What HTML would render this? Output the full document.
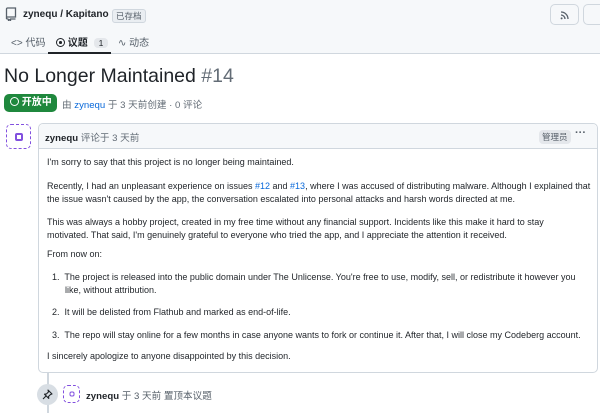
<!DOCTYPE html>
<html><head><meta charset="utf-8"><style>
*{margin:0;padding:0;box-sizing:border-box}
body{width:600px;height:413px;overflow:hidden;background:#fff;font-family:"Liberation Sans","Noto Sans CJK SC",sans-serif;color:#1f2328;position:relative}
.hdr{position:absolute;left:0;top:0;width:600px;height:54px;background:#f6f8fa;border-bottom:1px solid #d0d7de}
.abs{position:absolute;white-space:nowrap}
.lbl{border:1px solid #d0d7de;border-radius:3px;background:#eaeef2;font-size:8.5px;padding:0 3px;color:#57606a}
.p{position:absolute;left:47px;font-size:9px;line-height:12.5px;color:#1f2328;white-space:nowrap}
a{color:#0969da;text-decoration:none}
.av{position:absolute;border:1.5px dashed #8250df;border-radius:5px}
.av i{position:absolute;left:50%;top:50%;border:2px solid #8250df;border-radius:2px;transform:translate(-50%,-50%)}
</style></head><body>
<div class="hdr"></div>
<svg class="abs" style="left:5px;top:7px" width="12" height="14" viewBox="0 0 12 14"><path d="M1.5 12V2a1 1 0 011-1h8v9h-8a1 1 0 00-1 1 1 1 0 001 1h1M3.5 12v1.5l1-0.7 1 .7V12h5" fill="none" stroke="#57606a" stroke-width="1.3"/></svg>
<div class="abs" style="left:23px;top:9px;font-size:10px;font-weight:bold">zynequ / Kapitano</div>
<div class="abs lbl" style="left:112px;top:9px">已存档</div>
<div class="abs" style="left:550px;top:4px;width:29px;height:21px;border:1px solid #d0d7de;border-radius:5px;background:#f6f8fa"><svg style="position:absolute;left:9px;top:5px" width="10" height="10" viewBox="0 0 10 10"><path d="M1 2a7 7 0 017 7M1 5a4 4 0 014 4" fill="none" stroke="#57606a" stroke-width="1.3"/><circle cx="1.6" cy="8.4" r="1" fill="#57606a"/></svg></div>
<div class="abs" style="left:583px;top:4px;width:30px;height:21px;border:1px solid #d0d7de;border-radius:5px;background:#f6f8fa"></div>
<div class="abs" style="left:11px;top:34px;font-size:10px;color:#57606a">&lt;&gt; 代码</div>
<div class="abs" style="left:56px;top:34px;font-size:10px;font-weight:bold"><span style="display:inline-block;width:9px;height:9px;border:1.3px solid #1f2328;border-radius:50%;vertical-align:-1px;position:relative"><span style="position:absolute;left:2px;top:2px;width:2.5px;height:2.5px;background:#1f2328;border-radius:50%"></span></span> 议题 <span style="display:inline-block;background:#e4e7eb;border-radius:4px;font-size:8.5px;font-weight:normal;padding:0 5px;margin-left:3px">1</span></div>
<div class="abs" style="left:48px;top:52px;width:63px;height:2px;background:#1f2328"></div>
<div class="abs" style="left:118px;top:34px;font-size:10px;color:#57606a">∿ 动态</div>
<div class="abs" style="left:4px;top:65px;font-size:19.5px">No Longer Maintained <span style="color:#636c76">#14</span></div>
<div class="abs" style="left:4px;top:94px;width:53px;height:18px;background:#1f883d;border-radius:5px;color:#fff;font-size:10px;font-weight:bold;line-height:18px;padding-left:6px"><span style="display:inline-block;width:9px;height:9px;border:1.3px solid #fff;border-radius:50%;vertical-align:-1px"></span> 开放中</div>
<div class="abs" style="left:62px;top:97px;font-size:9.6px;color:#636c76">由 <a>zynequ</a> 于 3 天前创建 · 0 评论</div>
<div class="av" style="left:6px;top:124px;width:25px;height:25px"><i style="width:8px;height:8px"></i></div>
<div class="abs" style="left:38px;top:123px;width:560px;height:250px;border:1px solid #d0d7de;border-radius:5px"></div>
<div class="abs" style="left:39px;top:124px;width:558px;height:25px;background:#f6f8fa;border-bottom:1px solid #d0d7de;border-radius:5px 5px 0 0"></div>
<div class="abs" style="left:45px;top:130px;font-size:9.6px;color:#636c76"><b style="color:#1f2328">zynequ</b> 评论于 3 天前</div>
<div class="abs" style="left:539px;top:130px;font-size:8.5px;background:#e4e7eb;border-radius:4px;padding:1px 3px;color:#57606a">管理员</div>
<div class="abs" style="left:575px;top:127px;font-size:11px;color:#57606a;font-weight:bold">···</div>
<div class="p" style="top:156px">I'm sorry to say that this project is no longer being maintained.</div>
<div class="p" style="top:180px">Recently, I had an unpleasant experience on issues <a>#12</a> and <a>#13</a>, where I was accused of distributing malware. Although I explained that<br>the issue wasn't caused by the app, the conversation escalated into personal attacks and harsh words directed at me.</div>
<div class="p" style="top:216px">This was always a hobby project, created in my free time without any financial support. Incidents like this make it hard to stay<br>motivated. That said, I'm genuinely grateful to everyone who tried the app, and I appreciate the attention it received.</div>
<div class="p" style="top:248px">From now on:</div>
<div class="p" style="top:271px;left:52px">1.&nbsp; The project is released into the public domain under The Unlicense. You're free to use, modify, sell, or redistribute it however you<br><span style="padding-left:13px">like, without attribution.</span></div>
<div class="p" style="top:306px;left:52px">2.&nbsp; It will be delisted from Flathub and marked as end-of-life.</div>
<div class="p" style="top:329px;left:52px">3.&nbsp; The repo will stay online for a few months in case anyone wants to fork or continue it. After that, I will close my Codeberg account.</div>
<div class="p" style="top:350px">I sincerely apologize to anyone disappointed by this decision.</div>
<div class="abs" style="left:47px;top:373px;width:2px;height:40px;background:#d0d7de"></div>
<div class="abs" style="left:37px;top:384px;width:21px;height:21px;border-radius:50%;background:#d8dee4"><svg style="position:absolute;left:5px;top:5px" width="11" height="11" viewBox="0 0 11 11"><path d="M1 10l3-3M6 1l4 4-1.5.5-2 2 .3 2L2.5 5.2l2-.3 2-2z" fill="none" stroke="#1f2328" stroke-width="1.1" stroke-linejoin="round"/></svg></div>
<div class="av" style="left:63px;top:385px;width:17px;height:18px"><i style="width:5px;height:5px;border-width:1.5px"></i></div>
<div class="abs" style="left:86px;top:388px;font-size:9.6px;color:#57606a"><b style="color:#1f2328">zynequ</b> 于 3 天前 置顶本议题</div>
</body></html>
